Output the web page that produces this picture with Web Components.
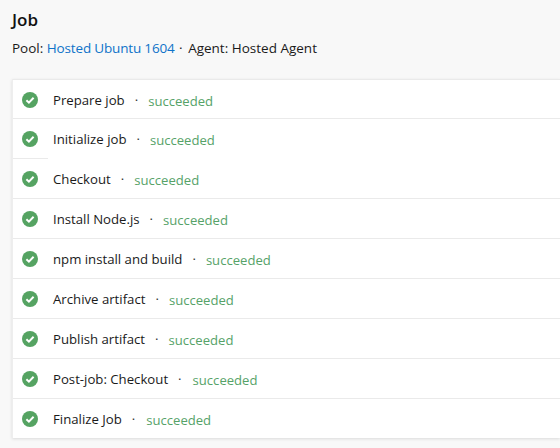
<!DOCTYPE html>
<html><head><meta charset="utf-8">
<style>
html,body{margin:0;padding:0;background:#f8f8f8;overflow:hidden}
body{width:560px;height:448px;font-family:"Open Sans","Noto Sans",sans-serif;color:#1a1a1a}
</style></head><body>
<job-page>
<job-header slot="head"></job-header>
<job-step name="Prepare job" h="38" first></job-step>
<job-step name="Initialize job" h="40" short></job-step>
<job-step name="Checkout" h="40"></job-step>
<job-step name="Install Node.js" h="40"></job-step>
<job-step name="npm install and build" h="40"></job-step>
<job-step name="Archive artifact" h="40"></job-step>
<job-step name="Publish artifact" h="40"></job-step>
<job-step name="Post-job: Checkout" h="40" gap="11"></job-step>
<job-step name="Finalize Job" h="40" gap="11" last></job-step>
</job-page>
<script>
class JobPage extends HTMLElement{constructor(){super();this.attachShadow({mode:'open'}).innerHTML=`<style>
:host{display:block;padding:0 0 0 12px}
.card{background:#fff;margin-top:16px;border-top:1px solid #eaeaea;box-shadow:0 1px 3px rgba(0,0,0,.12);border-left:1px solid #eee}
</style><slot name="head"></slot><div class="card"><slot></slot></div>`}}
class JobHeader extends HTMLElement{constructor(){super();this.attachShadow({mode:'open'}).innerHTML=`<style>
:host{display:block;height:63px;box-sizing:border-box;padding-top:9px}
h1{margin:0;font-size:17px;font-weight:600;line-height:22px;color:#111}
p{margin:8px 0 0;font-size:13.5px;line-height:18px;color:#1a1a1a}
a{color:#0f73c9;text-decoration:none;letter-spacing:-.17px;margin-right:1px}
.d{margin-right:5.5px}
</style><h1>Job</h1><p>Pool: <a>Hosted Ubuntu 1604</a> <span class="d">·</span>Agent: Hosted Agent</p>`}}
class JobStep extends HTMLElement{constructor(){super();const h=this.getAttribute('h');const short=this.hasAttribute('short');const last=this.hasAttribute('last');const gap=this.getAttribute('gap')||10;
this.attachShadow({mode:'open'}).innerHTML=`<style>
:host{display:block;position:relative;box-sizing:border-box;height:${h}px}
.row{display:flex;align-items:center;height:100%;box-sizing:border-box;padding:2px 0 0 9px;font-size:13.2px;color:#1a1a1a}
svg{width:16px;height:16px;flex:none;margin-right:15px}
.dot{margin:0 ${gap}px 0 10px;color:#333}
.st{color:#56a268;font-size:13.1px;position:relative;top:1px}
.line{position:absolute;left:0;bottom:-1px;height:1px;background:#eaeaea;${short?'width:35px':'right:0'};${last?'display:none':''}}
</style><div class="row"><svg viewBox="0 0 16 16"><circle cx="8" cy="8" r="8" fill="#55a362"/><path d="M4.4 8.3l2.5 2.4 4.7-4.9" fill="none" stroke="#fff" stroke-width="2"/></svg><span>${this.getAttribute('name')}</span><span class="dot">·</span><span class="st">succeeded</span></div><div class="line"></div>`}}
customElements.define('job-page',JobPage);customElements.define('job-header',JobHeader);customElements.define('job-step',JobStep);
</script>
</body></html>
